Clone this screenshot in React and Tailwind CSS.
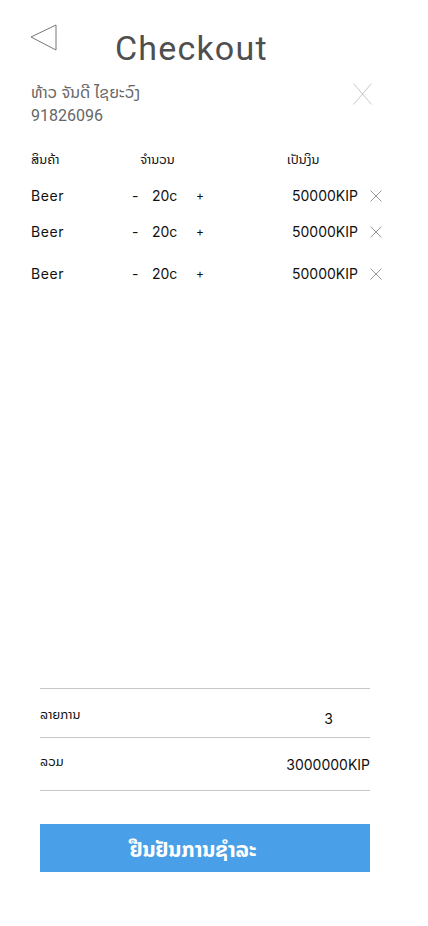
import React from 'react';

const items = [
  { name: 'Beer', qty: '20c', price: '50000KIP' },
  { name: 'Beer', qty: '20c', price: '50000KIP' },
  { name: 'Beer', qty: '20c', price: '50000KIP' },
];

const Cross = ({ w = 12, h = 12, className = '' }) => (
  <svg width={w} height={h} viewBox={`0 0 ${w} ${h}`} className={className}>
    <path d={`M0.5 0.5 L${w - 0.5} ${h - 0.5} M${w - 0.5} 0.5 L0.5 ${h - 0.5}`} stroke="currentColor" strokeWidth="1" fill="none" />
  </svg>
);

export default function App() {
  return (
    <div className="min-h-[926px] w-[428px] bg-white flex flex-col font-['Inter','Noto_Sans_Lao','DejaVu_Sans',sans-serif]">
      {/* Header */}
      <div className="flex items-start pt-[24px] pl-[30px]">
        <svg width="28" height="28" viewBox="0 0 28 28" className="text-[#777]">
          <polygon points="1,13 26,1 26,26" fill="none" stroke="currentColor" strokeWidth="1" />
        </svg>
        <h1 className="ml-[57px] mt-[4px] font-['Roboto',sans-serif] text-[34px] leading-[40px] tracking-[0.035em] text-[#4f4f4f]">Checkout</h1>
      </div>

      {/* Customer */}
      <div className="flex items-start justify-between pl-[31px] pr-[56px] mt-[14px]">
        <div className="text-[16px] leading-[22px] text-[#666] font-['Roboto','Noto_Sans_Lao','DejaVu_Sans',sans-serif]">
          <p>ທ້າວ ຈັນດີ ໄຊຍະວົງ</p>
          <p className="mt-[1px]">91826096</p>
        </div>
        <Cross w={19} h={22} className="text-[#c8c8c8] mt-[1px]" />
      </div>

      {/* Table head */}
      <div className="flex pl-[31px] mt-[22px] text-[13px] leading-[20px] text-[#111]">
        <span className="w-[109px]">ສິນຄ້າ</span>
        <span className="w-[147px]">ຈຳນວນ</span>
        <span>ເປັນງິນ</span>
      </div>

      {/* Items */}
      <div className="pl-[31px] mt-[17px] text-[14px] leading-[20px] text-[#111]">
        {items.map((it, i) => (
          <div key={i} className={`flex items-center ${i === 1 ? 'mt-[16px]' : i === 2 ? 'mt-[22px]' : ''}`}>
            <span className="w-[101px] tracking-[0.04em]">{it.name}</span>
            <span className="w-[20px]">-</span>
            <span className="w-[44px]">{it.qty}</span>
            <span className="w-[96px] text-[12px]">+</span>
            <span className="w-[78px]">{it.price}</span>
            <Cross className="text-[#999]" />
          </div>
        ))}
      </div>

      {/* Summary */}
      <div className="mt-auto ml-[40px] w-[330px] pb-[54px]">
        <div className="border-t border-[#c8c8c8] h-[49px] flex justify-between items-start text-[14px] leading-[20px] text-[#111]">
          <span className="pt-[15px] text-[13px]">ລາຍການ</span>
          <span className="pt-[20px] mr-[37px]">3</span>
        </div>
        <div className="border-t border-[#c8c8c8] h-[53px] flex justify-between items-start text-[14px] leading-[20px] text-[#111]">
          <span className="pt-[13px] text-[13px]">ລວມ</span>
          <span className="pt-[17px]">3000000KIP</span>
        </div>
        <div className="border-t border-[#c8c8c8]" />
        <button className="mt-[33px] w-full h-[48px] bg-[#4aa0e8] text-white text-[21px] font-bold flex items-center justify-center pt-[4px] pr-[24px]">
          ຢືນຢັນການຊຳລະ
        </button>
      </div>
    </div>
  );
}
